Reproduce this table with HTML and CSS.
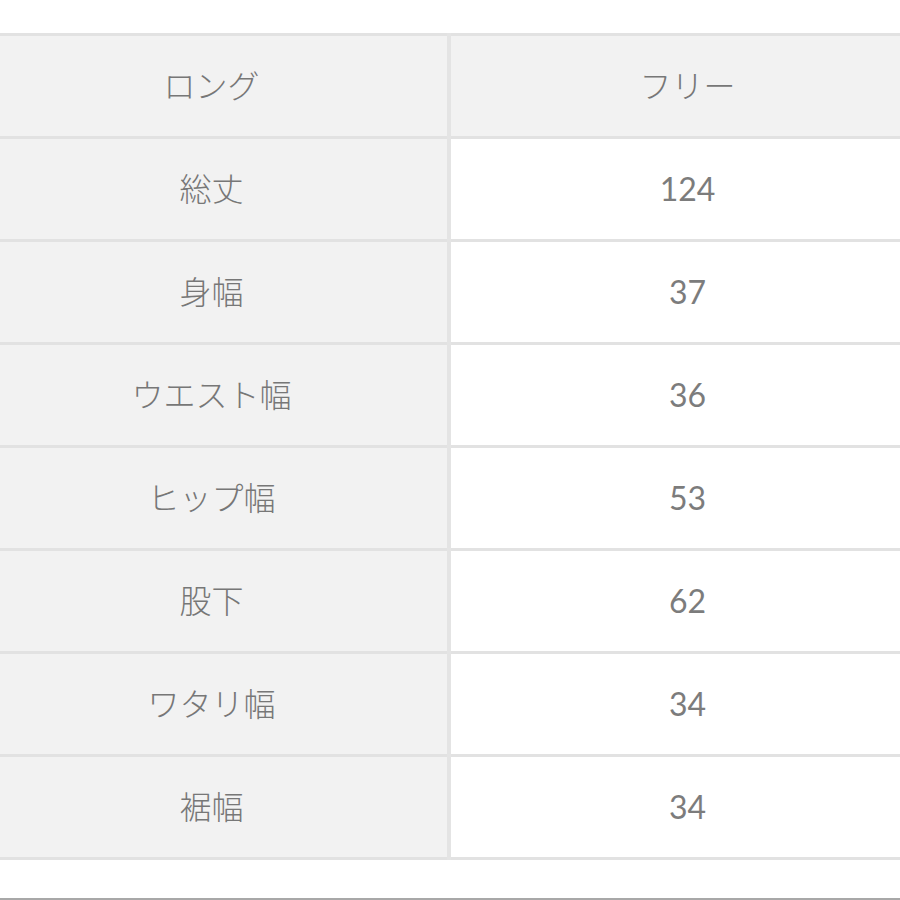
FILE: index.html
```html
<!DOCTYPE html>
<html lang="ja">
<head>
<meta charset="utf-8">
<title>サイズ表</title>
<link rel="stylesheet" href="styles.css">
</head>
<body>
<div class="page">
  <table class="size-table">
    <tr class="head"><td class="label">ロング</td><td class="value">フリー</td></tr>
    <tr><td class="label">総丈</td><td class="value num">124</td></tr>
    <tr><td class="label">身幅</td><td class="value num">37</td></tr>
    <tr><td class="label">ウエスト幅</td><td class="value num">36</td></tr>
    <tr><td class="label">ヒップ幅</td><td class="value num">53</td></tr>
    <tr><td class="label">股下</td><td class="value num">62</td></tr>
    <tr><td class="label">ワタリ幅</td><td class="value num">34</td></tr>
    <tr><td class="label">裾幅</td><td class="value num">34</td></tr>
  </table>
  <div class="rule"></div>
</div>
</body>
</html>
```
FILE: styles.css
```css
html, body {
  margin: 0;
  padding: 0;
  background: #ffffff;
}
.page {
  width: 900px;
  height: 900px;
  padding-top: 33px;
  box-sizing: border-box;
  display: flex;
  flex-direction: column;
  overflow: hidden;
}
.size-table {
  width: 948px;
  flex: none;
  margin-left: -24px;
  border-collapse: collapse;
  table-layout: fixed;
  border-top: 3px solid #e2e2e2;
  font-family: Lato, "Noto Sans CJK JP", sans-serif;
  font-weight: 300;
  font-size: 32px;
  color: #777777;
}
.size-table td {
  height: 100px;
  padding: 0;
  text-align: center;
  vertical-align: middle;
  border-bottom: 3px solid #e2e2e2;
  line-height: 1;
}
.size-table td.label {
  width: 471px;
  background: #f2f2f2;
  border-right: 4px solid #e4e4e4;
}
.size-table td.value {
  background: #ffffff;
}
.size-table td.num {
  font-weight: 400;
  color: #7c7c7c;
}
.size-table tr.head td.value {
  background: #f2f2f2;
}
.rule {
  margin-top: auto;
  height: 2px;
  background: #a8a8a8;
}
```
